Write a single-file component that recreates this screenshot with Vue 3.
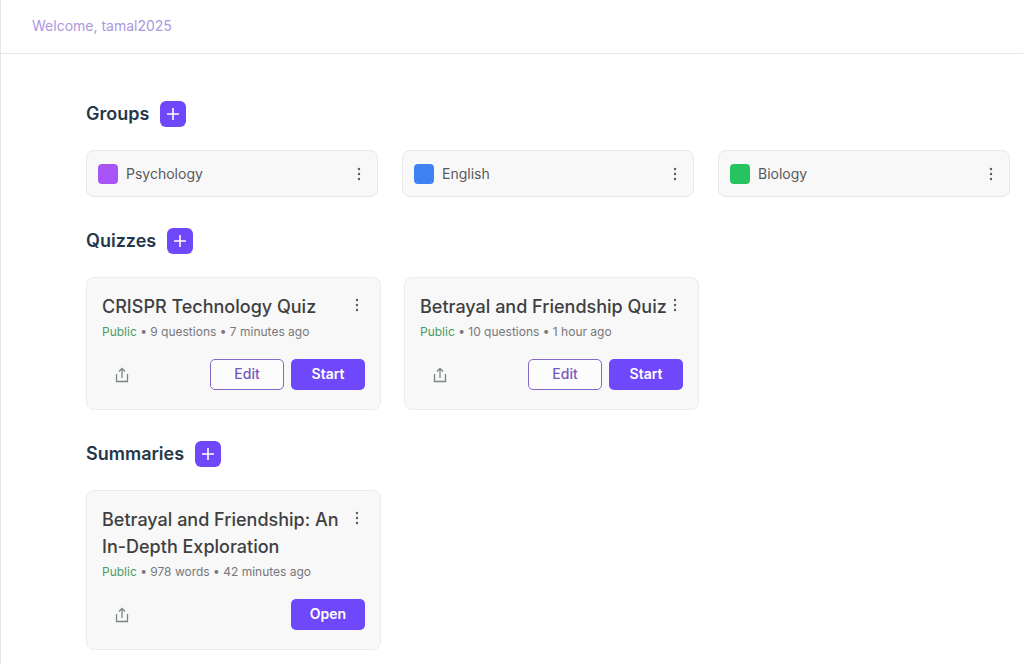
<script setup>
const groups = [
  { name: 'Psychology', tone: 'purple' },
  { name: 'English', tone: 'blue' },
  { name: 'Biology', tone: 'green' },
]

const sections = [
  {
    title: 'Quizzes',
    addLabel: 'Add quiz',
    items: [
      { title: 'CRISPR Technology Quiz', size: '9 questions', age: '7 minutes ago', actions: ['Edit', 'Start'] },
      { title: 'Betrayal and Friendship Quiz', size: '10 questions', age: '1 hour ago', actions: ['Edit', 'Start'] },
    ],
  },
  {
    title: 'Summaries',
    addLabel: 'Add summary',
    items: [
      { title: 'Betrayal and Friendship: An In-Depth Exploration', size: '978 words', age: '42 minutes ago', actions: ['Open'] },
    ],
  },
]
</script>

<template>
  <div class="page">
    <header class="topbar">Welcome, tamal2025</header>
    <main class="content">
      <section>
        <div class="heading">
          <h2>Groups</h2>
          <button class="add" type="button" aria-label="Add group">
            <svg width="14" height="14" viewBox="0 0 14 14"><path d="M7 1v12M1 7h12" /></svg>
          </button>
        </div>
        <div class="groups">
          <article v-for="group in groups" :key="group.name" class="group">
            <span class="swatch" :class="group.tone"></span>
            <span class="group-name">{{ group.name }}</span>
            <button class="more" type="button" :aria-label="`${group.name} options`">
              <svg width="4" height="14" viewBox="0 0 4 14"><circle cx="2" cy="2" r="1.2" /><circle cx="2" cy="7" r="1.2" /><circle cx="2" cy="12" r="1.2" /></svg>
            </button>
          </article>
        </div>
      </section>

      <section v-for="section in sections" :key="section.title">
        <div class="heading">
          <h2>{{ section.title }}</h2>
          <button class="add" type="button" :aria-label="section.addLabel">
            <svg width="14" height="14" viewBox="0 0 14 14"><path d="M7 1v12M1 7h12" /></svg>
          </button>
        </div>
        <div class="cards">
          <article v-for="item in section.items" :key="item.title" class="card">
            <div class="card-top">
              <h3>{{ item.title }}</h3>
              <button class="more" type="button" :aria-label="`${item.title} options`">
                <svg width="4" height="14" viewBox="0 0 4 14"><circle cx="2" cy="2" r="1.2" /><circle cx="2" cy="7" r="1.2" /><circle cx="2" cy="12" r="1.2" /></svg>
              </button>
            </div>
            <p class="meta"><span class="public">Public</span> • {{ item.size }} • {{ item.age }}</p>
            <div class="actions">
              <button class="share" type="button" :aria-label="`Share ${item.title}`">
                <svg width="14" height="16" viewBox="0 0 14 16"><path d="M1.5 7v7.5h11V7M7 11V1.5M4 4.5l3-3 3 3" /></svg>
              </button>
              <button
                v-for="action in item.actions"
                :key="action"
                class="btn"
                :class="{ outline: action === 'Edit' }"
                type="button"
              >{{ action }}</button>
            </div>
          </article>
        </div>
      </section>
    </main>
  </div>
</template>

<style>
body {
  background: #fff;
}
</style>

<style scoped>
.page {
  min-height: 100vh;
  box-sizing: border-box;
  border-left: 1px solid #e6e6e8;
  font-family: Inter, "Liberation Sans", sans-serif;
  color: #3f3f42;
}

h2,
h3,
p {
  margin: 0;
}

button {
  font-family: inherit;
  padding: 0;
  border: 0;
  background: none;
  cursor: pointer;
}

svg {
  display: block;
}

.topbar {
  padding: 16px 31px 17px;
  border-bottom: 1px solid #e6e6e8;
  font-size: 14px;
  line-height: 20px;
  color: #ac97e0;
}

.content {
  display: flex;
  flex-direction: column;
  gap: 31px;
  padding: 47px 13px 13px 85px;
}

.heading {
  display: flex;
  align-items: center;
  gap: 11px;
  margin-bottom: 23px;
}

h2 {
  font-size: 18px;
  line-height: 26px;
  font-weight: 600;
  color: #25374b;
}

.add {
  display: grid;
  place-items: center;
  width: 26px;
  height: 26px;
  border-radius: 6px;
  background: #7048fb;
}

.add path {
  fill: none;
  stroke: #fff;
  stroke-width: 1.6;
}

.groups {
  display: grid;
  grid-template-columns: repeat(3, 1fr);
  gap: 24px;
}

.group {
  display: flex;
  align-items: center;
  padding: 12px 16px 12px 11px;
  border: 1px solid #e8e8ea;
  border-radius: 8px;
  background: #f8f8f8;
}

.swatch {
  width: 20px;
  height: 20px;
  border-radius: 4px;
}

.purple {
  background: #a855f7;
}

.blue {
  background: #3f82f4;
}

.green {
  background: #26c260;
}

.group-name {
  flex: 1;
  margin-left: 8px;
  font-size: 14px;
  line-height: 21px;
  color: #58585b;
}

.more {
  flex: none;
}

.more circle {
  fill: #5c5c60;
}

.cards {
  display: grid;
  grid-template-columns: repeat(auto-fill, 295px);
  gap: 23px;
}

.card {
  padding: 15px 15px 19px;
  border: 1px solid #ececee;
  border-radius: 8px;
  background: #f8f8f8;
}

.card-top {
  display: flex;
  align-items: flex-start;
  justify-content: space-between;
}

.card-top .more {
  margin: 5px 6px 0 0;
}

h3 {
  font-size: 18px;
  line-height: 27px;
  font-weight: 500;
}

.meta {
  margin-top: 3px;
  font-size: 12px;
  line-height: 18px;
  color: #77777b;
}

.public {
  color: #4d9b61;
}

.actions {
  display: flex;
  align-items: center;
  gap: 7px;
  margin-top: 18px;
}

.share {
  margin-right: auto;
  padding-left: 13px;
}

.share path {
  fill: none;
  stroke: #7b8583;
  stroke-width: 1.3;
}

.btn {
  box-sizing: border-box;
  width: 74px;
  height: 31px;
  padding-bottom: 2px;
  border-radius: 5px;
  background: #7048fb;
  color: #fff;
  font-size: 14px;
  font-weight: 600;
}

.outline {
  border: 1px solid #8566c9;
  background: #fcfcfd;
  color: #7657c2;
  font-weight: 500;
}
</style>
